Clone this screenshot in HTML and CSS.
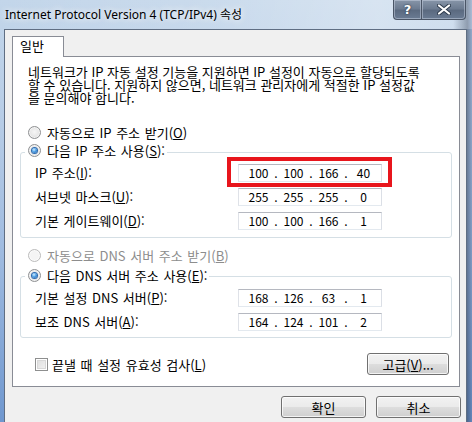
FILE: index.html
```html
<!DOCTYPE html>
<html lang="ko">
<head>
<meta charset="utf-8">
<title>Internet Protocol Version 4 (TCP/IPv4) 속성</title>
<link rel="stylesheet" href="styles.css">
</head>
<body>
<div class="window">
  <div class="titlebar">
    <div class="title">Internet Protocol Version 4 (TCP/IPv4) 속성</div>
    <div class="caption-btns">
      <div class="cbtn help">?</div>
      <div class="cbtn close">
        <svg width="14" height="11" viewBox="0 0 14 11"><path d="M2 1.5 L12 9.5 M12 1.5 L2 9.5" stroke="#2d3a4c" stroke-width="4" stroke-linecap="round"/><path d="M2 1.5 L12 9.5 M12 1.5 L2 9.5" stroke="#ffffff" stroke-width="2.2" stroke-linecap="round"/></svg>
      </div>
    </div>
  </div>
  <div class="client">
    <div class="tab">일반</div>
    <div class="panel">
      <p class="desc">네트워크가 IP 자동 설정 기능을 지원하면 IP 설정이 자동으로 할당되도록<br>할 수 있습니다. 지원하지 않으면, 네트워크 관리자에게 적절한 IP 설정값<br>을 문의해야 합니다.</p>
      <div class="opt first"><span class="radio"></span>자동으로 IP 주소 받기(<u>O</u>)</div>
      <div class="group g1">
        <div class="legend"><span class="radio on"></span>다음 IP 주소 사용(<u>S</u>):</div>
        <div class="row"><span>IP 주소(<u>I</u>):</span><div class="ip"><span class="seg">100</span><span class="dot">.</span><span class="seg">100</span><span class="dot">.</span><span class="seg">166</span><span class="dot">.</span><span class="seg">40</span><span class="mark"></span></div></div>
        <div class="row"><span>서브넷 마스크(<u>U</u>):</span><div class="ip"><span class="seg">255</span><span class="dot">.</span><span class="seg">255</span><span class="dot">.</span><span class="seg">255</span><span class="dot">.</span><span class="seg">0</span></div></div>
        <div class="row"><span>기본 게이트웨이(<u>D</u>):</span><div class="ip"><span class="seg">100</span><span class="dot">.</span><span class="seg">100</span><span class="dot">.</span><span class="seg">166</span><span class="dot">.</span><span class="seg">1</span></div></div>
      </div>
      <div class="opt second disabled"><span class="radio"></span>자동으로 DNS 서버 주소 받기(<u>B</u>)</div>
      <div class="group g2">
        <div class="legend"><span class="radio on"></span>다음 DNS 서버 주소 사용(<u>E</u>):</div>
        <div class="row"><span>기본 설정 DNS 서버(<u>P</u>):</span><div class="ip"><span class="seg">168</span><span class="dot">.</span><span class="seg">126</span><span class="dot">.</span><span class="seg">63</span><span class="dot">.</span><span class="seg">1</span></div></div>
        <div class="row"><span>보조 DNS 서버(<u>A</u>):</span><div class="ip"><span class="seg">164</span><span class="dot">.</span><span class="seg">124</span><span class="dot">.</span><span class="seg">101</span><span class="dot">.</span><span class="seg">2</span></div></div>
      </div>
      <div class="foot">
        <div class="check"><span class="box"></span>끝낼 때 설정 유효성 검사(<u>L</u>)</div>
        <div class="btn adv">고급(<u>V</u>)...</div>
      </div>
    </div>
    <div class="dlg-btns">
      <div class="btn">확인</div>
      <div class="btn">취소</div>
    </div>
  </div>
</div>
</body>
</html>
```
FILE: styles.css
```css
* { box-sizing: border-box; }
html, body { margin: 0; padding: 0; }
body {
  width: 472px;
  height: 422px;
  overflow: hidden;
  font-family: "Noto Sans CJK KR", sans-serif;
  font-size: 13px;
  color: #000;
}
u { text-decoration: underline; text-underline-offset: 1px; }

.window {
  width: 472px;
  height: 422px;
  display: flex;
  flex-direction: column;
  background:
    linear-gradient(90deg, rgba(255,255,255,0) 0%, rgba(255,255,255,0) 96%, rgba(50,65,90,0.55) 99%, rgba(80,110,160,0.4) 100%),
    linear-gradient(180deg, #c3d6ea 0%, #b6cce6 30%, #9fbbe0 60%, #6f97cf 100%);
}

.titlebar {
  height: 29px;
  flex-shrink: 0;
  display: flex;
  align-items: flex-start;
  background: linear-gradient(90deg, rgba(255,255,255,0) 0%, rgba(255,255,255,0.12) 45%, rgba(255,255,255,0.35) 80%, rgba(255,255,255,0.2) 100%);
}
.title {
  margin: 7px 0 0 5px;
  line-height: 15px;
  font-family: "Noto Sans", "Noto Sans CJK KR", sans-serif;
  font-size: 12px;
  color: #000;
  text-shadow: 0 0 6px rgba(255,255,255,0.9), 0 0 10px rgba(255,255,255,0.7);
}
.caption-btns {
  margin-left: auto;
  margin-right: 6px;
  display: flex;
}
.cbtn {
  height: 20px;
  display: flex;
  align-items: center;
  justify-content: center;
  background: linear-gradient(180deg, #8795a8 0%, #6d7c91 45%, #5b6a80 55%, #6a7b93 100%);
  border: 1px solid #4a5566;
  border-top: none;
  box-shadow: inset 0 0 0 1px rgba(210,220,235,0.45);
  color: #fff;
}
.help {
  width: 28px;
  border-bottom-left-radius: 4px;
  border-right: none;
  font-family: "DejaVu Sans", sans-serif;
  font-weight: bold;
  font-size: 13px;
  text-shadow: 0 0 2px #2d3a4c, 0 0 1px #2d3a4c;
}
.close {
  width: 45px;
  border-bottom-right-radius: 4px;
}

.client {
  flex: 1;
  margin-left: 4px;
  width: 463px;
  border: 1px solid #5f6e83;
  border-bottom: none;
  background: #f0f0f0;
  padding: 6px 0 0 7px;
}
.tab {
  position: relative;
  z-index: 1;
  width: 52px;
  height: 21px;
  margin-bottom: -1px;
  border: 1px solid #898c95;
  border-bottom: none;
  background: #fff;
  padding-left: 7px;
  line-height: 18px;
}
.panel {
  width: 448px;
  border: 1px solid #898c95;
  background: #fff;
  padding: 0 7px 11px 7px;
}
.desc {
  margin: 8px 0 0 8px;
  line-height: 13px;
  white-space: nowrap;
}
.opt, .legend, .check {
  display: flex;
  align-items: center;
  height: 16px;
  white-space: nowrap;
  word-spacing: 1px;
}
.row > span { word-spacing: 1px; }
.opt { margin-left: 8px; }
.opt.first { margin-top: 20px; }
.opt.second { margin-top: 9px; }
.disabled { color: #8d8d8d; }

.radio {
  width: 13px;
  height: 13px;
  margin-right: 6px;
  border-radius: 50%;
  border: 1px solid #8e9092;
  background: radial-gradient(circle at 50% 45%, #f6f6f6 0%, #e6e6e6 55%, #cfcfcf 100%);
  box-shadow: inset 0 0 0 1px rgba(255,255,255,0.6);
  display: flex;
  align-items: center;
  justify-content: center;
  flex-shrink: 0;
}
.radio.on::after {
  content: "";
  width: 5px;
  height: 5px;
  border-radius: 50%;
  background: radial-gradient(circle at 40% 35%, #d6f0ff 0%, #4da0e6 45%, #1d5aa6 100%);
  box-shadow: 0 0 0 1px #2e6bb0;
}
.disabled .radio {
  border-color: #bcbcbc;
  background: #f4f4f4;
}

.group {
  border: 1px solid #d5dfe5;
  border-radius: 3px;
  padding: 0 0 8px 14px;
}
.g1 { margin-top: 12px; }
.g2 { margin-top: 13px; padding-bottom: 7px; }
.legend {
  width: fit-content;
  margin: -11px 0 0 -10px;
  padding: 0 2px 0 3px;
  background: #fff;
}
.g2 .legend { margin-top: -10px; }

.row {
  display: grid;
  grid-template-columns: 203px 144px;
  align-items: center;
  height: 18px;
  margin-top: 6px;
  white-space: nowrap;
}
.legend + .row { margin-top: 5px; }

.ip {
  position: relative;
  width: 144px;
  height: 18px;
  display: flex;
  align-items: center;
  padding-left: 4px;
  border: 1px solid;
  border-color: #b5b8c0 #dbdfe6 #e3e9ef #dfe2e8;
  background: #fff;
  font-size: 12px;
  line-height: 16px;
}
.seg { width: 31px; text-align: center; }
.dot { width: 4px; text-align: center; }
.mark {
  position: absolute;
  left: -12px;
  top: -8px;
  width: 165px;
  height: 30px;
  border: 4px solid #e8151c;
}

.foot {
  display: flex;
  align-items: center;
  justify-content: space-between;
  margin-top: 15px;
  padding: 0 3px 0 15px;
}
.box {
  width: 13px;
  height: 13px;
  margin-right: 4px;
  border: 1px solid #8e8f8f;
  background: linear-gradient(135deg, #dcdcdc 0%, #f4f4f4 100%);
  box-shadow: inset 0 0 0 1px #fff, inset 0 0 0 2px #d8d8d8;
}

.btn {
  height: 22px;
  display: flex;
  align-items: center;
  justify-content: center;
  border: 1px solid #707070;
  border-radius: 3px;
  background: linear-gradient(180deg, #f2f2f2 0%, #ebebeb 48%, #dddddd 52%, #cfcfcf 100%);
  box-shadow: inset 0 0 0 1px rgba(255,255,255,0.75);
  white-space: nowrap;
}
.adv { width: 82px; }
.dlg-btns {
  display: flex;
  justify-content: flex-end;
  gap: 10px;
  margin-top: 9px;
  padding-right: 5px;
}
.dlg-btns .btn { width: 85px; }
```
